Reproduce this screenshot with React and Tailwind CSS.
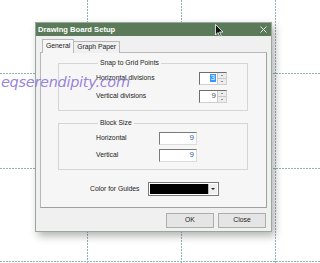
import React from "react";

const font = { fontFamily: '"Liberation Sans", Arial, sans-serif' };

function VLine({ x, top, height }) {
  return (
    <div
      className="absolute w-px bg-[repeating-linear-gradient(to_bottom,#8db3b3_0_2px,transparent_2px_3px)]"
      style={{ left: x, top, height }}
    />
  );
}
function HLine({ y, left, width }) {
  return (
    <div
      className="absolute h-px bg-[repeating-linear-gradient(to_right,#8db3b3_0_2px,transparent_2px_3px)]"
      style={{ top: y, left, width }}
    />
  );
}

function Spinner({ value, selected }) {
  return (
    <div className="flex h-[13px] w-[28px] border border-t-[#6d6d6d] border-l-[#6d6d6d] border-r-[#d0d0d0] border-b-[#d0d0d0] bg-white">
      <div className="flex flex-1 items-center justify-end pr-[1px] text-[8px] leading-none">
        <span className={selected ? "bg-[#3399ff] text-white px-[1px]" : "text-[#555]"}>{value}</span>
      </div>
      <div className="flex w-[9px] flex-col border-l border-[#c8c8c8] bg-[#ececec]">
        <div className="flex flex-1 items-center justify-center border-b border-[#c8c8c8]">
          <div className="h-0 w-0 border-x-[1.5px] border-b-[1.5px] border-x-transparent border-b-[#333]" />
        </div>
        <div className="flex flex-1 items-center justify-center">
          <div className="h-0 w-0 border-x-[1.5px] border-t-[1.5px] border-x-transparent border-t-[#333]" />
        </div>
      </div>
    </div>
  );
}

function TextBox({ value }) {
  return (
    <div className="flex h-[13px] w-[38px] items-center justify-end border border-t-[#7a7a7a] border-l-[#7a7a7a] border-r-[#dcdcdc] border-b-[#dcdcdc] bg-white pr-[2px] text-[8px] leading-none text-[#2f5fae]">
      {value}
    </div>
  );
}

export default function App() {
  return (
    <div className="relative h-[263px] w-[320px] overflow-hidden bg-white" style={font}>
      {/* guide lines */}
      <VLine x={87} top={0} height={263} />
      <VLine x={181} top={0} height={263} />
      <VLine x={275} top={0} height={263} />
      <HLine y={73} left={0} width={320} />
      <HLine y={168} left={0} width={320} />
      <HLine y={261} left={0} width={320} />

      {/* dialog */}
      <div className="absolute left-[35px] top-[22px] flex h-[210px] w-[237px] flex-col border border-[#9aa89a] bg-[#f0f0f0] shadow-[3px_4px_8px_rgba(0,0,0,0.3)]">
        <div className="flex h-[13px] items-center justify-between bg-[#5b7a59] pl-[2px] pr-[4px]">
          <span className="text-[7.6px] font-bold leading-none text-white">Drawing Board Setup</span>
          <svg width="7" height="7" viewBox="0 0 7 7">
            <path d="M0.5 0.5 L6.5 6.5 M6.5 0.5 L0.5 6.5" stroke="#e8ece8" strokeWidth="1" />
          </svg>
        </div>

        <div className="flex flex-1 flex-col px-[4px] pt-[3px]">
          {/* tabs */}
          <div className="relative z-10 flex h-[14px] items-end pl-[2px]">
            <div className="flex h-[14px] items-center border border-b-0 border-[#b8b8b8] bg-[#f6f6f6] px-[3px] text-[6.8px] leading-none text-[#222]">
              General
            </div>
            <div className="flex h-[12px] items-center border border-b-0 border-l-0 border-[#b8b8b8] bg-[#f0f0f0] px-[3px] text-[6.8px] leading-none text-[#222]">
              Graph Paper
            </div>
          </div>
          <div className="-mt-px flex h-[156px] flex-col border border-[#b8b8b8] border-b-[#a0a0a0] border-r-[#a0a0a0] bg-[#f6f6f6] pl-[17px] pr-[18px] pt-[7px] text-[6.8px] text-[#222]">
            <fieldset className="h-[51px] border border-[#d5d5d5] pl-[37px] pr-[20px]">
              <legend className="ml-[2px] px-[2px] leading-none">Snap to Grid Points</legend>
              <div className="mt-[5px] flex flex-col gap-[5px]">
                <div className="flex items-center justify-between">
                  <span>Horizontal divisions</span>
                  <Spinner value="3" selected />
                </div>
                <div className="flex items-center justify-between">
                  <span>Vertical divisions</span>
                  <Spinner value="9" />
                </div>
              </div>
            </fieldset>
            <fieldset className="mt-[9px] h-[50px] border border-[#d5d5d5] px-[37px]">
              <legend className="ml-[2px] px-[2px] leading-none">Block Size</legend>
              <div className="mt-[5px] flex w-[101px] flex-col gap-[4px]">
                <div className="flex items-center justify-between">
                  <span>Horizontal</span>
                  <TextBox value="9" />
                </div>
                <div className="flex items-center justify-between">
                  <span>Vertical</span>
                  <TextBox value="9" />
                </div>
              </div>
            </fieldset>
            <div className="mt-[12px] flex items-center pl-[32px]">
              <span>Color for Guides</span>
              <div className="ml-[8px] flex h-[14px] w-[71px] border border-[#7a7a7a] bg-white p-[1px]">
                <div className="flex-1 bg-black" />
                <div className="flex w-[9px] items-center justify-center border-l border-[#bbb] bg-[#efefef]">
                  <div className="h-0 w-0 border-x-[2px] border-t-[2px] border-x-transparent border-t-[#222]" />
                </div>
              </div>
            </div>
          </div>

          {/* buttons */}
          <div className="mt-[5px] flex justify-end gap-[4px] pr-[1px]">
            <div className="flex h-[15px] w-[48px] items-center justify-center border border-[#adadad] bg-[#e5e5e5] text-[6.8px] text-[#222]">
              OK
            </div>
            <div className="flex h-[15px] w-[48px] items-center justify-center border border-[#adadad] bg-[#e5e5e5] text-[6.8px] text-[#222]">
              Close
            </div>
          </div>
        </div>
      </div>

      {/* cursor */}
      <svg className="absolute left-[215px] top-[24px]" width="9" height="14" viewBox="0 0 9 14">
        <path d="M0.5 0.5 L0.5 11 L3 8.5 L4.8 12.8 L6.3 12.2 L4.6 8 L8 8 Z" fill="#111" stroke="#fff" strokeWidth="0.8" />
      </svg>

      {/* watermark */}
      <div className="absolute left-[1px] top-[75px] text-[14.5px] italic leading-none tracking-[-0.3px] text-[#8b74d6]/90" style={{ fontFamily: '"DejaVu Sans", sans-serif' }}>
        eqserendipity.com
      </div>
    </div>
  );
}
